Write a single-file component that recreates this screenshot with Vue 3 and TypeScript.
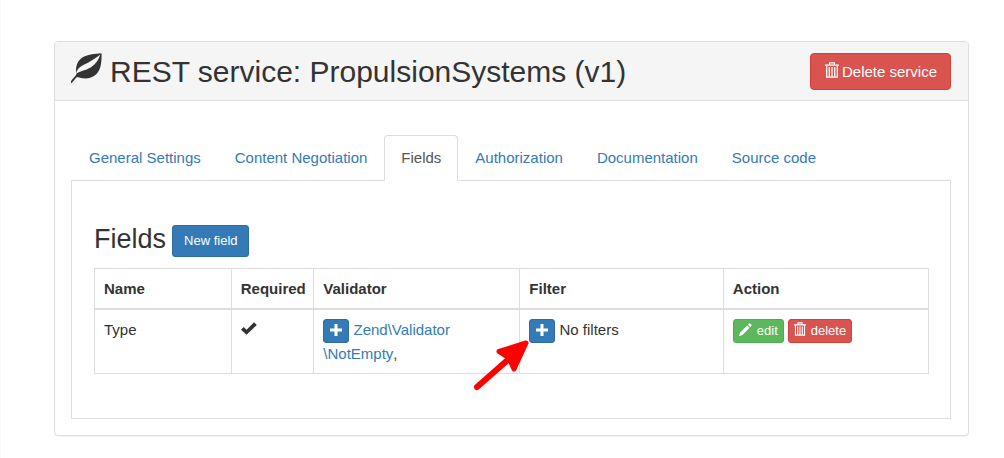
<script setup lang="ts">
import { ref } from 'vue'

interface Field {
  name: string
  required: boolean
  validators: string[][]
  filters: string[]
}

const tabs: string[] = [
  'General Settings',
  'Content Negotiation',
  'Fields',
  'Authorization',
  'Documentation',
  'Source code',
]
const activeTab = ref('Fields')

const fields: Field[] = [
  { name: 'Type', required: true, validators: [['Zend\\Validator', '\\NotEmpty']], filters: [] },
]
</script>

<template>
  <main class="page">
    <section class="panel">
      <header class="panel-heading">
        <h1 class="title">
          <svg class="leaf" viewBox="0 0 31 31" aria-hidden="true">
            <path fill="currentColor" d="M30.6.3C25 1.200 14.500.8 9 6.500C5 10.700 4.600 16 5.400 21.200C4.300 23.500 0 27 0 28.600V30.300C1.800 29.900 3.400 26 6.200 24.100C12 26.300 20 26.400 25 21.600C31 15.800 30.500 6.500 30.600.3Z" />
            <path fill="#f5f5f5" d="M5 21C6.500 12.800 14 11.800 19 8.500C23 6 26.500 4 29.300 1.500C27.800 7 24.500 11 20 14.200C15 17.500 9.500 17.300 5 21Z" />
          </svg>
          REST service: PropulsionSystems (v1)
        </h1>
        <button type="button" class="btn btn-danger">
          <svg class="trash" viewBox="0 0 14 16" aria-hidden="true">
            <path fill="none" stroke="currentColor" stroke-width="1.300" d="M0 3.200H14M4.600 3V.8H9.400V3M1.700 4V15.200H12.300V4M4.300 5V14.500M7 5V14.500M9.700 5V14.500" />
          </svg>
          Delete service
        </button>
      </header>

      <div class="panel-body">
        <nav class="tabs">
          <a
            v-for="tab in tabs"
            :key="tab"
            href="#"
            class="tab"
            :class="{ active: tab === activeTab }"
            @click.prevent="activeTab = tab"
          >{{ tab }}</a>
        </nav>

        <div class="tab-content">
          <div class="section-head">
            <h2 class="subtitle">Fields</h2>
            <button type="button" class="btn btn-primary btn-sm">New field</button>
          </div>

          <table class="fields">
            <colgroup>
              <col class="col-name" />
              <col class="col-required" />
              <col class="col-validator" />
              <col class="col-filter" />
              <col class="col-action" />
            </colgroup>
            <thead>
              <tr>
                <th>Name</th>
                <th>Required</th>
                <th>Validator</th>
                <th>Filter</th>
                <th>Action</th>
              </tr>
            </thead>
            <tbody>
              <tr v-for="field in fields" :key="field.name">
                <td>{{ field.name }}</td>
                <td>
                  <svg v-if="field.required" class="check" viewBox="0 0 16 13" role="img" aria-label="Required">
                    <path fill="currentColor" d="M0 7.800L2.700 5.100L5.600 7.700L13 .3L15.800 3L5.600 12.800Z" />
                  </svg>
                </td>
                <td>
                  <button type="button" class="btn btn-primary btn-xs" aria-label="Add validator">
                    <svg class="plus" viewBox="0 0 12 12" aria-hidden="true">
                      <path fill="currentColor" d="M4.500 0H7.500V4.500H12V7.500H7.500V12H4.500V7.500H0V4.500H4.500Z" />
                    </svg>
                  </button>
                  {{ ' ' }}<template v-for="parts in field.validators" :key="parts.join('')"><a href="#" class="link"><template v-for="part in parts" :key="part">{{ part }}<wbr /></template></a>,</template>
                </td>
                <td>
                  <span class="pointed">
                    <button type="button" class="btn btn-primary btn-xs" aria-label="Add filter">
                      <svg class="plus" viewBox="0 0 12 12" aria-hidden="true">
                        <path fill="currentColor" d="M4.500 0H7.500V4.500H12V7.500H7.500V12H4.500V7.500H0V4.500H4.500Z" />
                      </svg>
                    </button>
                    <svg class="arrow" viewBox="0 0 56 51" aria-hidden="true">
                      <path stroke="#f00" stroke-width="6" stroke-linecap="round" d="M4 47L38 17" />
                      <path fill="#f00" stroke="#f00" stroke-width="5" stroke-linejoin="round" d="M53 3L26 11.500L36 18L41 29Z" />
                    </svg>
                  </span>
                  {{ field.filters.length ? field.filters.join(', ') : 'No filters' }}
                </td>
                <td>
                  <div class="actions">
                    <button type="button" class="btn btn-success btn-xs">
                      <svg class="pencil" viewBox="0 0 14 14" aria-hidden="true">
                        <path fill="currentColor" d="M0 14L1.200 10.200L8.800 2.600L11.400 5.200L3.800 12.800ZM9.600 1.800L11 .4C11.500-.2 14.200 2.200 13.500 3L12.200 4.400Z" />
                      </svg>
                      edit
                    </button>
                    <button type="button" class="btn btn-danger btn-xs">
                      <svg class="trash small" viewBox="0 0 14 16" aria-hidden="true">
                        <path fill="none" stroke="currentColor" stroke-width="1.300" d="M0 3.200H14M4.600 3V.8H9.400V3M1.700 4V15.200H12.300V4M4.300 5V14.500M7 5V14.500M9.700 5V14.500" />
                      </svg>
                      delete
                    </button>
                  </div>
                </td>
              </tr>
            </tbody>
          </table>
        </div>
      </div>
    </section>
  </main>
</template>

<style>
body {
  background: #fff;
}
</style>

<style scoped>
.page,
.page * {
  box-sizing: border-box;
}
.page {
  padding: 41px 35px 22px 53px;
  border-left: 1px solid #f8f8f8;
  color: #333;
  font: 15px/24px "Liberation Sans", Arial, sans-serif;
}
.panel {
  border: 1px solid #ddd;
  border-radius: 4px;
  box-shadow: 0 1px 1px rgba(0, 0, 0, 0.05);
}
.panel-heading {
  display: flex;
  justify-content: space-between;
  align-items: flex-start;
  padding: 11px 17px 10px 16px;
  background: #f5f5f5;
  border-bottom: 1px solid #ddd;
  border-radius: 3px 3px 0 0;
}
.title {
  display: flex;
  align-items: center;
  gap: 8px;
  margin: 0;
  font-size: 30px;
  line-height: 37px;
  font-weight: 400;
}
.leaf {
  width: 31px;
  height: 31px;
  margin-bottom: 6px;
}
.btn {
  display: inline-flex;
  align-items: center;
  justify-content: center;
  gap: 3px;
  margin: 0;
  padding: 6px 13px 5px 14px;
  border: 1px solid;
  border-radius: 4px;
  color: #fff;
  font: inherit;
  cursor: pointer;
}
.btn-danger {
  background: #d9534f;
  border-color: #d43f3a;
}
.btn-primary {
  background: #337ab7;
  border-color: #2e6da4;
}
.btn-success {
  background: #5cb85c;
  border-color: #4cae4c;
}
.btn-sm {
  padding: 5px 10px 5px 11px;
  border-radius: 3px;
  font-size: 13px;
  line-height: 20px;
}
.btn-xs {
  gap: 5px;
  margin: 1px 0 -1px;
  padding: 1px 5px;
  border-radius: 3px;
  font-size: 13px;
  line-height: 20px;
  vertical-align: top;
}
.trash {
  width: 14px;
  height: 16px;
  margin-bottom: 4px;
}
.trash.small {
  width: 12px;
  height: 14px;
}
.pencil {
  width: 13px;
  height: 13px;
  margin-bottom: 3px;
}
.plus {
  width: 14px;
  height: 12px;
  margin: 3px 0 5px;
}
.panel-body {
  padding: 34px 17px 16px 16px;
}
.tabs {
  display: flex;
  padding-left: 1px;
  border-bottom: 1px solid #ddd;
}
.tab {
  margin-bottom: -1px;
  padding: 10px 16px;
  border: 1px solid transparent;
  border-radius: 4px 4px 0 0;
  color: #337ab7;
  text-decoration: none;
}
.tab.active {
  border-color: #ddd #ddd #fff;
  background: #fff;
  color: #555;
}
.tab-content {
  padding: 44px 21px 44px 22px;
  border: 1px solid #ddd;
  border-top: 0;
}
.section-head {
  display: flex;
  gap: 6px;
  margin-bottom: 11px;
}
.subtitle {
  margin: 0;
  font-size: 27px;
  line-height: 28px;
  font-weight: 400;
}
.fields {
  width: 100%;
  table-layout: fixed;
  border-collapse: collapse;
}
.col-name {
  width: 16.4%;
}
.col-required {
  width: 9.9%;
}
.col-validator {
  width: 24.7%;
}
.col-filter {
  width: 24.4%;
}
.col-action {
  width: 24.6%;
}
th,
td {
  padding: 8px 9px 7px;
  border: 1px solid #ddd;
  text-align: left;
  vertical-align: top;
}
th {
  border-bottom-width: 2px;
}
.check {
  width: 16px;
  height: 13px;
}
.link {
  color: #337ab7;
  text-decoration: none;
}
.pointed {
  position: relative;
  display: inline-block;
  vertical-align: top;
}
.arrow {
  position: absolute;
  top: 22px;
  left: -56px;
  width: 56px;
  height: 51px;
  pointer-events: none;
}
.actions {
  display: flex;
  gap: 4px;
}
</style>
